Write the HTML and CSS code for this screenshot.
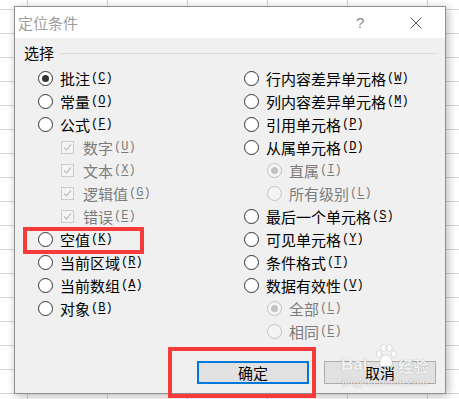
FILE: index.html
```html
<!DOCTYPE html>
<html lang="zh-CN">
<head>
    <meta charset="UTF-8">
    <title>定位条件</title>
    <link rel="stylesheet" href="styles.css">
</head>
<body>

<div class="dialog">
    <div class="titlebar">
        <span class="title">定位条件</span>
        <span class="help">?</span>
        <svg class="close" width="12" height="12" viewBox="0 0 12 12">
            <path d="M0.5 0.5 L11.5 11.5 M11.5 0.5 L0.5 11.5" stroke="#555" stroke-width="1" fill="none"/>
        </svg>
    </div>

    <div class="group-head">
        <span class="legend">选择</span>
        <span class="rule"></span>
    </div>

    <div class="options">
        <div class="col">
            <div class="opt"><span class="radio on"></span>批注<span class="key">(<u>C</u>)</span></div>
            <div class="opt"><span class="radio"></span>常量<span class="key">(<u>O</u>)</span></div>
            <div class="opt"><span class="radio"></span>公式<span class="key">(<u>F</u>)</span></div>
            <div class="opt sub off"><span class="check"><svg viewBox="0 0 11 11"><path d="M2 5.5 L4.5 8 L9 2.5"/></svg></span>数字<span class="key">(<u>U</u>)</span></div>
            <div class="opt sub off"><span class="check"><svg viewBox="0 0 11 11"><path d="M2 5.5 L4.5 8 L9 2.5"/></svg></span>文本<span class="key">(<u>X</u>)</span></div>
            <div class="opt sub off"><span class="check"><svg viewBox="0 0 11 11"><path d="M2 5.5 L4.5 8 L9 2.5"/></svg></span>逻辑值<span class="key">(<u>G</u>)</span></div>
            <div class="opt sub off"><span class="check"><svg viewBox="0 0 11 11"><path d="M2 5.5 L4.5 8 L9 2.5"/></svg></span>错误<span class="key">(<u>E</u>)</span></div>
            <div class="opt"><span class="radio"></span>空值<span class="key">(<u>K</u>)</span></div>
            <div class="opt"><span class="radio"></span>当前区域<span class="key">(<u>R</u>)</span></div>
            <div class="opt"><span class="radio"></span>当前数组<span class="key">(<u>A</u>)</span></div>
            <div class="opt"><span class="radio"></span>对象<span class="key">(<u>B</u>)</span></div>
        </div>
        <div class="col">
            <div class="opt"><span class="radio"></span>行内容差异单元格<span class="key">(<u>W</u>)</span></div>
            <div class="opt"><span class="radio"></span>列内容差异单元格<span class="key">(<u>M</u>)</span></div>
            <div class="opt"><span class="radio"></span>引用单元格<span class="key">(<u>P</u>)</span></div>
            <div class="opt"><span class="radio"></span>从属单元格<span class="key">(<u>D</u>)</span></div>
            <div class="opt sub off"><span class="radio on"></span>直属<span class="key">(<u>I</u>)</span></div>
            <div class="opt sub off"><span class="radio"></span>所有级别<span class="key">(<u>L</u>)</span></div>
            <div class="opt"><span class="radio"></span>最后一个单元格<span class="key">(<u>S</u>)</span></div>
            <div class="opt"><span class="radio"></span>可见单元格<span class="key">(<u>Y</u>)</span></div>
            <div class="opt"><span class="radio"></span>条件格式<span class="key">(<u>T</u>)</span></div>
            <div class="opt"><span class="radio"></span>数据有效性<span class="key">(<u>V</u>)</span></div>
            <div class="opt sub off"><span class="radio on"></span>全部<span class="key">(<u>L</u>)</span></div>
            <div class="opt sub off"><span class="radio"></span>相同<span class="key">(<u>E</u>)</span></div>
        </div>
    </div>

    <div class="buttons">
        <button class="btn default">确定</button>
        <button class="btn">取消</button>
    </div>
</div>

<!-- annotations drawn over the screenshot -->
<div class="mark mark-empty"></div>
<div class="mark mark-ok"></div>

<div class="watermark">
    <span class="wm-bai">Bai</span>
    <svg class="wm-paw" width="22" height="26" viewBox="0 0 22 26">
        <ellipse cx="4" cy="10" rx="2.6" ry="3.4"/>
        <ellipse cx="8.5" cy="4" rx="2.6" ry="3.4"/>
        <ellipse cx="14.5" cy="4" rx="2.6" ry="3.4"/>
        <ellipse cx="19" cy="10" rx="2.6" ry="3.4"/>
        <path d="M11 11 C6 11 4 18 5 21 C6 24 9 22 11 22 C13 22 16 24 17 21 C18 18 16 11 11 11 Z"/>
    </svg>
    <span class="wm-jy">经验</span>
    <div class="wm-url">jingyan.baidu.com</div>
</div>

</body>
</html>
```

FILE: styles.css
```css
html, body {
    margin: 0;
    padding: 0;
}
body {
    width: 459px;
    height: 399px;
    overflow: hidden;
    position: relative;
    font-family: "Noto Sans CJK SC", sans-serif;
    background-color: #fff;
    background-image:
        linear-gradient(to right, #d6d6d6 1px, transparent 1px),
        linear-gradient(to bottom, #d6d6d6 1px, transparent 1px);
    background-size: 80px 24px;
    background-position: 27px 0, 0 9px;
}
.dialog {
    margin: 6px 0 0 14px;
    width: 430px;
    height: 386px;
    border: 1px solid #8f8f8f;
    background: #f0f0f0;
    box-shadow: 2px 2px 9px rgba(0, 0, 0, 0.28);
    display: flex;
    flex-direction: column;
}
.titlebar {
    height: 31px;
    background: #fff;
    display: flex;
    align-items: center;
    padding-left: 3px;
}
.title {
    font-size: 15px;
    color: #a09c98;
    line-height: 20px;
}
.help {
    margin-left: auto;
    font-family: "Liberation Sans", sans-serif;
    font-size: 15px;
    color: #8a8a8a;
    width: 8px;
}
.close {
    margin: 0 23px 0 46px;
}
.group-head {
    height: 29px;
    display: flex;
    align-items: center;
}
.legend {
    padding-left: 9px;
    font-size: 15px;
    line-height: 18px;
    color: #000;
}
.rule {
    flex: 1;
    height: 1px;
    background: #dcdcdc;
    margin: 1px 8px 0 6px;
}
.options {
    display: grid;
    grid-template-columns: 206px 1fr;
    padding-left: 23px;
}
.opt {
    height: 23px;
    display: flex;
    align-items: center;
    font-size: 15px;
    line-height: 23px;
    white-space: nowrap;
    color: #000;
}
.opt.sub {
    padding-left: 23px;
}
.opt.off {
    color: #7c7c7c;
}
.key {
    font-family: "Liberation Mono", monospace;
    font-size: 12px;
    margin-left: 1px;
}
.key u {
    text-underline-offset: 2px;
}
.radio {
    flex: none;
    position: relative;
    width: 15px;
    height: 15px;
    box-sizing: border-box;
    border: 1px solid #333;
    border-radius: 50%;
    background: #fff;
    margin-right: 7px;
}
.radio.on::after {
    content: "";
    position: absolute;
    left: 3px;
    top: 3px;
    width: 7px;
    height: 7px;
    border-radius: 50%;
    background: #333;
}
.off .radio {
    border-color: #c2c2c2;
    background: #f4f4f4;
}
.off .radio.on::after {
    background: #c2c2c2;
}
.check {
    flex: none;
    width: 13px;
    height: 13px;
    box-sizing: border-box;
    border: 1px solid #cccccc;
    background: #f4f4f4;
    margin-right: 9px;
    display: flex;
}
.check svg {
    width: 11px;
    height: 11px;
}
.check path {
    fill: none;
    stroke: #c4c4c4;
    stroke-width: 1.4;
}
.buttons {
    display: flex;
    justify-content: flex-end;
    gap: 15px;
    margin-top: 18px;
    padding-right: 9px;
}
.btn {
    width: 112px;
    height: 23px;
    box-sizing: border-box;
    border: 1px solid #adadad;
    background: #e1e1e1;
    font-family: "Noto Sans CJK SC", sans-serif;
    font-size: 15px;
    line-height: 19px;
    color: #000;
    padding: 0;
}
.btn.default {
    border: 2px solid #0078d7;
}
.mark {
    position: absolute;
    box-sizing: border-box;
    border: 4px solid #f73b3b;
}
.mark-empty {
    left: 23px;
    top: 227px;
    width: 121px;
    height: 27px;
}
.mark-ok {
    left: 168px;
    top: 347px;
    width: 148px;
    height: 51px;
}
.watermark {
    position: absolute;
    left: 341px;
    top: 343px;
    width: 95px;
    color: rgba(255, 255, 255, 0.9);
    text-shadow: 0 0 1px rgba(0, 0, 0, 0.35);
}
.wm-bai {
    position: absolute;
    left: 0;
    top: 13px;
    font-family: "Liberation Sans", sans-serif;
    font-weight: bold;
    font-size: 17px;
    line-height: 17px;
}
.wm-paw {
    position: absolute;
    left: 34px;
    top: 1px;
    fill: rgba(255, 255, 255, 0.9);
    stroke: rgba(0, 0, 0, 0.15);
    stroke-width: 0.8;
}
.wm-jy {
    position: absolute;
    left: 57px;
    top: 14px;
    font-size: 15px;
    line-height: 17px;
    font-weight: bold;
}
.wm-url {
    position: absolute;
    left: 1px;
    top: 34px;
    font-family: "Liberation Sans", sans-serif;
    font-size: 10px;
    line-height: 12px;
    letter-spacing: 0.3px;
}
```
